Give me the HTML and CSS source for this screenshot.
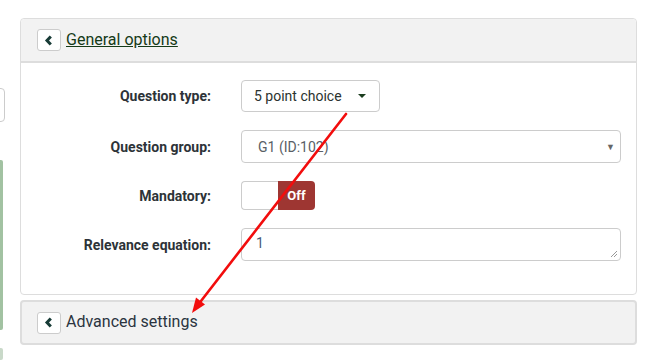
FILE: index.html
```html
<!DOCTYPE html>
<html lang="en">
<head>
  <meta charset="UTF-8" />
  <title>Question editor</title>
  <link rel="stylesheet" href="styles.css">
</head>
<body>
  <div class="page">
    <div class="side">
      <div class="side-box"></div>
      <div class="side-bar"></div>
      <div class="side-bar side-bar-small"></div>
    </div>

    <div class="main">
      <div class="panel">
        <div class="panel-heading">
          <span class="toggle-btn">
            <svg width="10" height="11" viewBox="0 0 10 11"><polyline points="6.8,1.5 3,5.5 6.8,9.5" fill="none" stroke="#173b36" stroke-width="3"/></svg>
          </span>
          <a class="panel-title" href="#">General options</a>
        </div>
        <div class="panel-body">
          <div class="form-row">
            <label>Question type:</label>
            <div class="dropdown-btn">
              <span>5 point choice</span>
              <span class="caret"></span>
            </div>
          </div>
          <div class="form-row">
            <label>Question group:</label>
            <div class="select">
              <span>G1 (ID:102)</span>
              <span class="select-arrow">&#9660;</span>
            </div>
          </div>
          <div class="form-row row-switch">
            <label>Mandatory:</label>
            <div class="switch">
              <span class="switch-on"></span>
              <span class="switch-off">Off</span>
            </div>
          </div>
          <div class="form-row">
            <label>Relevance equation:</label>
            <div class="textarea">
              <span>1</span>
              <svg class="grip" width="8" height="8" viewBox="0 0 8 8"><path d="M7 1 L1 7 M7 4 L4 7" stroke="#999" stroke-width="1"/></svg>
            </div>
          </div>
        </div>
      </div>

      <div class="panel panel-closed">
        <span class="toggle-btn">
          <svg width="10" height="11" viewBox="0 0 10 11"><polyline points="6.8,1.5 3,5.5 6.8,9.5" fill="none" stroke="#173b36" stroke-width="3"/></svg>
        </span>
        <span class="panel-title-plain">Advanced settings</span>
      </div>
    </div>
  </div>

  <!-- annotation arrow drawn over the page -->
  <svg class="annotation" width="651" height="360" viewBox="0 0 651 360">
    <line x1="346" y1="114" x2="201" y2="301" stroke="#f20d0d" stroke-width="2.6" stroke-linecap="round"/>
    <polygon points="192,313 205,304.5 196,297.5" fill="#f20d0d"/>
  </svg>
</body>
</html>
```

FILE: styles.css
```css
body {
  margin: 0;
  font-family: Roboto, "Liberation Sans", sans-serif;
  background-color: #fff;
  color: #333;
  overflow: hidden;
}
.page {
  display: flex;
  width: 651px;
  height: 360px;
}
.side {
  width: 20px;
  display: flex;
  flex-direction: column;
}
.side-box {
  margin-top: 88px;
  margin-left: -10px;
  width: 13px;
  height: 32px;
  border: 1px solid #ccc;
  border-radius: 4px;
}
.side-bar {
  margin-top: 38px;
  width: 3px;
  height: 173px;
  background-color: #a2c2a2;
  border-radius: 0 2px 2px 0;
}
.side-bar-small {
  margin-top: 18px;
  height: 12px;
  background-color: #c9d9c9;
}
.main {
  padding-top: 18px;
  width: 617px;
  display: flex;
  flex-direction: column;
  gap: 5px;
}
.panel {
  border: 1px solid #ddd;
  border-radius: 4px;
  background-color: #fff;
}
.panel-heading {
  height: 42px;
  background-color: #f2f2f2;
  border-bottom: 2px solid #ddd;
  border-radius: 4px 4px 0 0;
  display: flex;
  align-items: center;
  padding-left: 16px;
}
.toggle-btn {
  width: 22px;
  height: 20px;
  border: 1px solid #ccc;
  border-radius: 3px;
  background-color: #fff;
  display: inline-flex;
  align-items: center;
  justify-content: center;
  margin-right: 5px;
}
.panel-title {
  font-size: 16px;
  color: #153a18;
  text-decoration: underline;
  margin-top: -2px;
}
.panel-body {
  padding: 17px 15px 33px 0;
  display: flex;
  flex-direction: column;
  gap: 18px;
}
.form-row {
  display: grid;
  grid-template-columns: 190px 1fr;
  column-gap: 30px;
  align-items: center;
}
.form-row label {
  text-align: right;
  font-weight: bold;
  font-size: 14px;
  color: #2d3338;
}
.dropdown-btn {
  border: 1px solid #ccc;
  border-radius: 4px;
  display: flex;
  align-items: center;
  justify-content: space-between;
  padding: 0 12px 0 12px;
  box-sizing: border-box;
  width: 139px;
  height: 32px;
  font-size: 14px;
  color: #2b3330;
}
.caret {
  width: 0;
  height: 0;
  border-left: 4px solid transparent;
  border-right: 4px solid transparent;
  border-top: 4px solid #1b3d1e;
  margin-right: 1px;
}
.select {
  height: 33px;
  box-sizing: border-box;
  border: 1px solid #ccc;
  border-radius: 4px;
  display: flex;
  align-items: center;
  justify-content: space-between;
  padding: 0 5px 0 16px;
  font-size: 14px;
  color: #5a5f66;
}
.select-arrow {
  font-size: 9px;
  color: #666;
}
.switch {
  display: flex;
  width: 74px;
  height: 29px;
}
.switch-on {
  width: 37px;
  box-sizing: border-box;
  border: 1px solid #ccc;
  border-right: none;
  border-radius: 4px 0 0 4px;
}
.switch-off {
  width: 37px;
  background-color: #9e3632;
  color: #fff;
  font-weight: bold;
  font-size: 13px;
  border-radius: 0 4px 4px 0;
  display: flex;
  align-items: center;
  justify-content: center;
}
.textarea {
  position: relative;
  height: 33px;
  box-sizing: border-box;
  border: 1px solid #ccc;
  border-radius: 4px;
  padding: 6px 14px;
  font-size: 14px;
  color: #4a5a78;
}
.grip {
  position: absolute;
  right: 2px;
  bottom: 2px;
}
.panel-closed {
  height: 41px;
  border: 2px solid #ddd;
  background-color: #f2f2f2;
  display: flex;
  align-items: center;
  padding-left: 15px;
}
.panel-title-plain {
  font-size: 16px;
  color: #2a3440;
  margin-top: -2px;
}
.annotation {
  position: absolute;
  left: 0;
  top: 0;
  pointer-events: none;
}
```
